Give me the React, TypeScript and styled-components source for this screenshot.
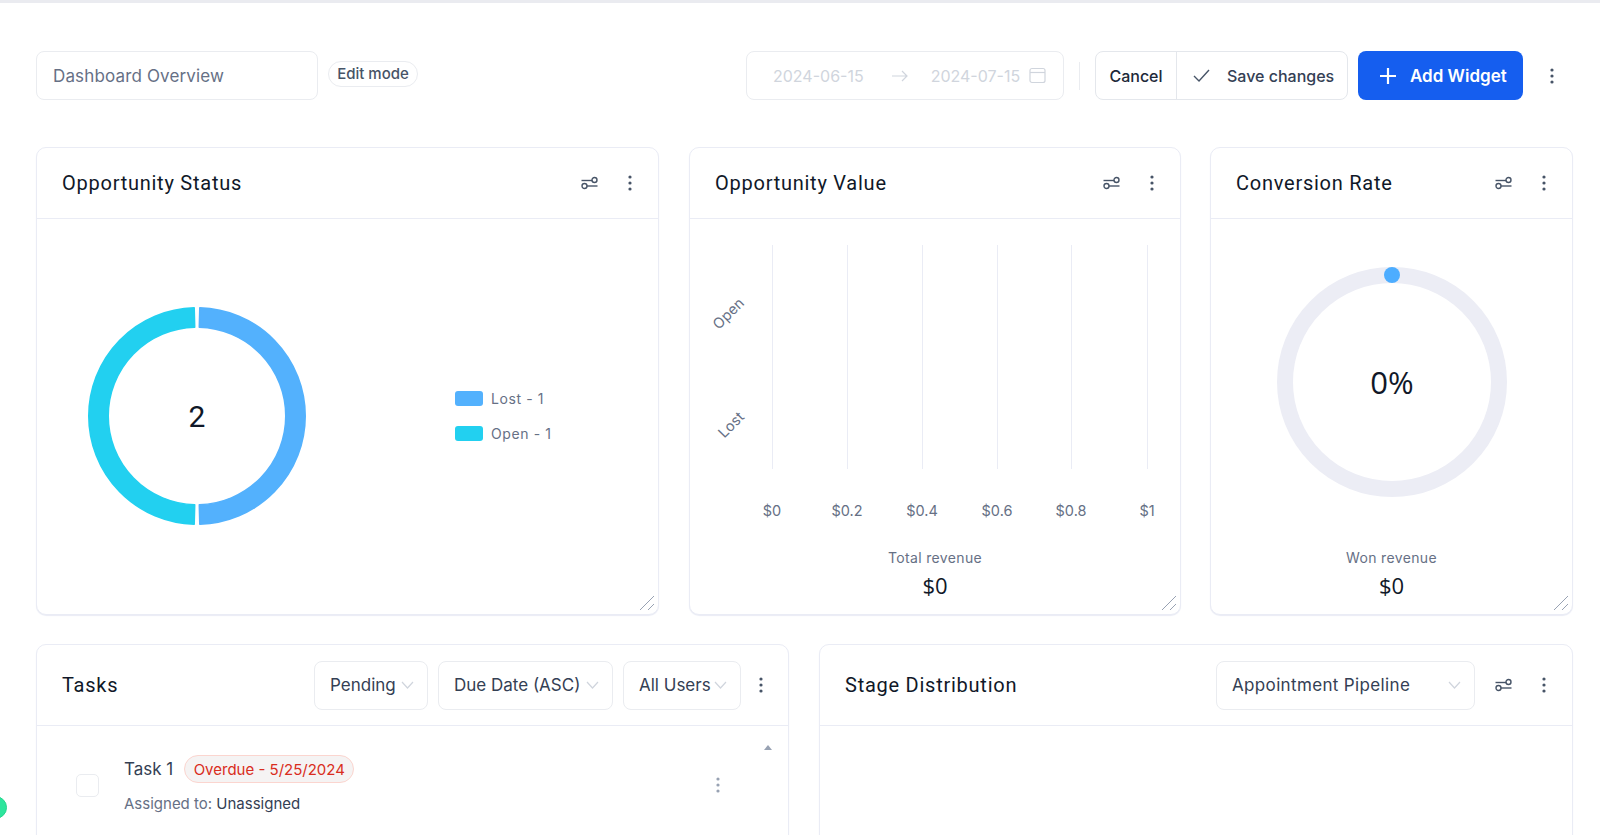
import React from "react";
import styled, { createGlobalStyle } from "styled-components";

const Global = createGlobalStyle`
  * { box-sizing: border-box; }
  html, body { margin: 0; padding: 0; background: #fff; overflow: hidden; }
  body { font-family: Inter, "Liberation Sans", sans-serif; color: #101828; }
`;

const Page = styled.div`
  position: relative;
  width: 1600px;
  height: 835px;
  overflow: hidden;
  border-top: 3px solid #eaebf0;
  padding: 48px 27px 0 36px;
`;

const Toolbar = styled.header`
  display: flex;
  align-items: center;
  height: 49px;
  margin-bottom: 47px;
`;

const NameBox = styled.div`
  width: 282px;
  height: 49px;
  border: 1px solid #eaecf0;
  border-radius: 8px;
  padding: 0 16px;
  display: flex;
  align-items: center;
  font-size: 17px;
  letter-spacing: 0.15px;
  color: #667085;
`;

const ModeBadge = styled.span`
  margin-left: 10px;
  height: 26px;
  width: 90px;
  margin-top: -4px;
  border: 1px solid #eaecf0;
  border-radius: 13px;
  display: flex;
  align-items: center;
  justify-content: center;
  font-size: 15px;
  font-weight: 500;
  color: #475467;
`;

const Spacer = styled.div`
  flex: 1;
`;

const DateBox = styled.div`
  width: 318px;
  height: 49px;
  border: 1px solid #eaecf0;
  border-radius: 8px;
  display: flex;
  align-items: center;
  padding-left: 26px;
  font-size: 16px;
  color: #d0d5dd;
`;

const DateArrow = styled.svg`
  margin: 0 22px 0 27px;
`;

const DateIcon = styled.svg`
  margin-left: 9px;
`;

const VRule = styled.div`
  width: 1px;
  height: 28px;
  background: #eaecf0;
  margin: 0 15px;
`;

const BtnGroup = styled.div`
  display: flex;
  width: 253px;
  height: 49px;
  border: 1px solid #e4e7ec;
  border-radius: 8px;
  font-size: 16px;
  font-weight: 500;
  color: #344054;
`;

const CancelPart = styled.div`
  width: 81px;
  display: flex;
  align-items: center;
  justify-content: center;
  border-right: 1px solid #e4e7ec;
  color: #1d2939;
`;

const SavePart = styled.div`
  flex: 1;
  display: flex;
  align-items: center;
  gap: 17px;
  padding-left: 16px;
`;

const AddButton = styled.button`
  margin-left: 10px;
  width: 165px;
  height: 49px;
  border: 0;
  border-radius: 8px;
  background: #155eef;
  color: #fff;
  font: 600 17px Inter, sans-serif;
  display: flex;
  align-items: center;
  padding: 0 0 0 21px;
  gap: 13px;
`;

const ToolbarDots = styled.div`
  width: 50px;
  display: flex;
  justify-content: flex-end;
  padding-right: 19px;
  color: #475467;
`;

const Row = styled.div<{ $gap: number }>`
  display: flex;
  gap: ${(p) => p.$gap}px;
  margin-bottom: 29px;
`;

const Card = styled.section<{ $w: number; $h: number; $mr?: number }>`
  position: relative;
  flex: 0 0 ${(p) => p.$w}px;
  height: ${(p) => p.$h}px;
  margin-right: ${(p) => p.$mr ?? 0}px;
  border: 1px solid #eaecf5;
  border-radius: 10px;
  box-shadow: 0 1px 1px #eaecf5;
  background: #fff;
  display: flex;
  flex-direction: column;
`;

const CardHead = styled.div<{ $h: number; $pr?: number }>`
  height: ${(p) => p.$h}px;
  flex: none;
  border-bottom: 1px solid #eaecf5;
  padding: 0 ${(p) => p.$pr ?? 9}px 0 25px;
  display: flex;
  align-items: center;
`;

const CardTitle = styled.h2`
  flex: 1;
  margin: 0;
  font: 400 20px Roboto, sans-serif;
  letter-spacing: 0.75px;
  color: #101828;
`;

const IconCell = styled.span<{ $w?: number }>`
  width: ${(p) => p.$w ?? 40}px;
  display: flex;
  justify-content: center;
  color: #475467;
`;

const SlidersSvg = styled.svg`
  margin-right: 3px;
`;

const Grip = styled.svg`
  position: absolute;
  right: 3px;
  bottom: 3px;
`;

const DonutBody = styled.div`
  flex: 1;
  display: flex;
  align-items: center;
  padding: 0 0 2px 51px;
`;

const Legend = styled.div`
  margin-left: 149px;
  display: flex;
  flex-direction: column;
  gap: 15px;
`;

const LegendRow = styled.div`
  display: flex;
  align-items: center;
  gap: 8px;
  font-size: 14px;
  color: #667085;
  height: 20px;
  letter-spacing: 0.6px;
`;

const Swatch = styled.span<{ $c: string }>`
  width: 28px;
  height: 15px;
  border-radius: 3px;
  background: ${(p) => p.$c};
`;

const ChartBody = styled.div`
  flex: 1;
  position: relative;
`;

const CenterFoot = styled.div`
  position: absolute;
  left: 0;
  right: 0;
  bottom: 12px;
  display: flex;
  flex-direction: column;
  align-items: center;
`;

const FootLabel = styled.div`
  font-size: 14px;
  line-height: 20px;
  letter-spacing: 0.35px;
  color: #667085;
`;

const FootValue = styled.div`
  margin: 2px 0;
  font: 400 22px "Open Sans", sans-serif;
  line-height: 30px;
  color: #101828;
`;

const ChartSvg = styled.svg`
  display: block;
`;

const RingBody = styled.div`
  flex: 1;
  position: relative;
  display: flex;
  justify-content: center;
`;

const SelectBox = styled.div<{ $w: number; $ls?: number }>`
  flex: 0 0 ${(p) => p.$w}px;
  height: 49px;
  border: 1px solid #eaecf0;
  border-radius: 8px;
  display: flex;
  align-items: center;
  justify-content: space-between;
  padding: 0 13px 0 15px;
  font-size: 17px;
  letter-spacing: ${(p) => p.$ls ?? 0}px;
  color: #344054;
  margin-right: 10px;
`;

const TaskRow = styled.div`
  position: relative;
  display: flex;
  align-items: center;
  padding: 29px 0 0 39px;
`;

const CheckBox = styled.span`
  width: 23px;
  height: 23px;
  border: 1px solid #eaecf0;
  border-radius: 5px;
  margin-right: 25px;
`;

const TaskMain = styled.div`
  flex: 1;
`;

const TaskLine = styled.div`
  display: flex;
  align-items: center;
  gap: 11px;
  font-size: 17px;
  color: #344054;
  height: 28px;
`;

const Overdue = styled.span`
  height: 28px;
  width: 170px;
  border: 1px solid #fbd5cf;
  border-radius: 14px;
  background: #f5f3f3;
  display: flex;
  align-items: center;
  justify-content: center;
  font-size: 15px;
  color: #d92d20;
`;

const Assigned = styled.div`
  margin-top: 10px;
  font-size: 15px;
  line-height: 22px;
  color: #667085;
`;

const Strong = styled.span`
  color: #344054;
`;

const ScrollUp = styled.span`
  position: absolute;
  right: 16px;
  top: 19px;
  width: 0;
  height: 0;
  border-left: 4.5px solid transparent;
  border-right: 4.5px solid transparent;
  border-bottom: 5px solid #98a2b3;
`;

const RowDots = styled.span`
  margin-right: 68px;
  display: flex;
  color: #98a2b3;
`;

const StatusDot = styled.span`
  position: absolute;
  left: -16px;
  top: 793px;
  width: 23px;
  height: 23px;
  border-radius: 50%;
  background: #2ee59d;
  border: 1px solid #25d68e;
`;

const Sliders = () => (
  <SlidersSvg width="17" height="14" viewBox="0 0 17 14" fill="none" stroke="currentColor" strokeWidth="1.4">
    <path d="M0.5 4.5h10.5" />
    <circle cx="13.5" cy="4" r="2.5" />
    <path d="M16.5 10H6" />
    <circle cx="3.5" cy="10" r="2.5" />
  </SlidersSvg>
);

const Dots = () => (
  <svg width="4" height="16" viewBox="0 0 4 16" fill="currentColor">
    <circle cx="2" cy="2" r="1.6" />
    <circle cx="2" cy="8" r="1.6" />
    <circle cx="2" cy="14" r="1.6" />
  </svg>
);

const Chevron = () => (
  <svg width="13" height="8" viewBox="0 0 13 8" fill="none" stroke="#d0d5dd" strokeWidth="1.2">
    <path d="M1 1l5.5 6L12 1" />
  </svg>
);

const GripIcon = () => (
  <Grip width="16" height="16" viewBox="0 0 16 16" stroke="#98a2b3" strokeWidth="1">
    <path d="M1 15L15 1M9 15l6-6" />
  </Grip>
);

const HeadIcons = () => (
  <>
    <IconCell><Sliders /></IconCell>
    <IconCell $w={38}><Dots /></IconCell>
  </>
);

const polar = (r: number, deg: number) => {
  const a = ((deg - 90) * Math.PI) / 180;
  return [109 + r * Math.cos(a), 109 + r * Math.sin(a)];
};

const arc = (ro: number, ri: number, from: number, to: number) => {
  const [x1, y1] = polar(ro, from);
  const [x2, y2] = polar(ro, to);
  const [x3, y3] = polar(ri, to);
  const [x4, y4] = polar(ri, from);
  return `M${x1} ${y1}A${ro} ${ro} 0 0 1 ${x2} ${y2}L${x3} ${y3}A${ri} ${ri} 0 0 0 ${x4} ${y4}Z`;
};

const xTicks = [
  { x: 83, t: "$0" },
  { x: 158, t: "$0.2" },
  { x: 233, t: "$0.4" },
  { x: 308, t: "$0.6" },
  { x: 382, t: "$0.8" },
  { x: 458, t: "$1" },
];

export default function App() {
  return (
    <Page>
      <Global />
      <Toolbar>
        <NameBox>Dashboard Overview</NameBox>
        <ModeBadge>Edit mode</ModeBadge>
        <Spacer />
        <DateBox>
          <span>2024-06-15</span>
          <DateArrow width="18" height="12" viewBox="0 0 18 12" fill="none" stroke="#d0d5dd" strokeWidth="1.2">
            <path d="M1 6h15M11 1l5 5-5 5" />
          </DateArrow>
          <span>2024-07-15</span>
          <DateIcon width="17" height="17" viewBox="0 0 17 17" fill="none" stroke="#d0d5dd" strokeWidth="1.2">
            <rect x="1" y="1.5" width="15" height="14" rx="2" />
            <path d="M1 5.5h15" />
          </DateIcon>
        </DateBox>
        <VRule />
        <BtnGroup>
          <CancelPart>Cancel</CancelPart>
          <SavePart>
            <svg width="17" height="13" viewBox="0 0 17 13" fill="none" stroke="#475467" strokeWidth="1.4">
              <path d="M1 7l5 5L16 1" />
            </svg>
            Save changes
          </SavePart>
        </BtnGroup>
        <AddButton>
          <svg width="18" height="18" viewBox="0 0 18 18" stroke="#fff" strokeWidth="2.2">
            <path d="M9 1v16M1 9h16" />
          </svg>
          Add Widget
        </AddButton>
        <ToolbarDots><Dots /></ToolbarDots>
      </Toolbar>

      <Row $gap={29}>
        <Card $w={623} $h={468} $mr={1}>
          <CardHead $h={71} $pr={9}>
            <CardTitle>Opportunity Status</CardTitle>
            <HeadIcons />
          </CardHead>
          <DonutBody>
            <ChartSvg width="218" height="218" viewBox="0 0 218 218">
              <path d={arc(108.2, 88.8, 1.5, 178.5)} fill="#53b1fd" stroke="#53b1fd" strokeWidth="1.6" strokeLinejoin="round" />
              <path d={arc(108.2, 88.8, 181.5, 358.5)} fill="#22d0f0" stroke="#22d0f0" strokeWidth="1.6" strokeLinejoin="round" />
              <text x="109" y="120" textAnchor="middle" fontFamily="Roboto, sans-serif" fontSize="30" fill="#101828">2</text>
            </ChartSvg>
            <Legend>
              <LegendRow><Swatch $c="#53b1fd" />Lost - 1</LegendRow>
              <LegendRow><Swatch $c="#22d0f0" />Open - 1</LegendRow>
            </Legend>
          </DonutBody>
          <GripIcon />
        </Card>

        <Card $w={492} $h={468}>
          <CardHead $h={71}>
            <CardTitle>Opportunity Value</CardTitle>
            <HeadIcons />
          </CardHead>
          <ChartBody>
            <ChartSvg width="490" height="300" viewBox="0 0 490 300">
              {xTicks.map((k) => (
                <line key={k.t} x1={k.x - 0.5} x2={k.x - 0.5} y1="26" y2="250" stroke="#eaecf5" />
              ))}
              {xTicks.map((k) => (
                <text key={k.t} x={k.x - 1} y="297" textAnchor="middle" fontSize="14.5" fill="#667085">{k.t}</text>
              ))}
              <text transform="translate(55 85) rotate(-45)" textAnchor="end" fontSize="14.5" fill="#667085">Open</text>
              <text transform="translate(55 199) rotate(-45)" textAnchor="end" fontSize="14.5" fill="#667085">Lost</text>
            </ChartSvg>
            <CenterFoot>
              <FootLabel>Total revenue</FootLabel>
              <FootValue>$0</FootValue>
            </CenterFoot>
          </ChartBody>
          <GripIcon />
        </Card>

        <Card $w={363} $h={468}>
          <CardHead $h={71}>
            <CardTitle>Conversion Rate</CardTitle>
            <HeadIcons />
          </CardHead>
          <RingBody>
            <ChartSvg width="240" height="290" viewBox="0 0 240 290">
              <circle cx="120" cy="163" r="107" fill="none" stroke="#ecedf5" strokeWidth="16" />
              <circle cx="120" cy="56" r="8" fill="#4dadff" />
              <text x="120" y="175" textAnchor="middle" fontFamily="Open Sans, sans-serif" fontSize="31" fill="#101828">0%</text>
            </ChartSvg>
            <CenterFoot>
              <FootLabel>Won revenue</FootLabel>
              <FootValue>$0</FootValue>
            </CenterFoot>
          </RingBody>
          <GripIcon />
        </Card>
      </Row>

      <Row $gap={30}>
        <Card $w={753} $h={300}>
          <CardHead $h={81} $pr={17}>
            <CardTitle>Tasks</CardTitle>
            <SelectBox $w={114}>Pending<Chevron /></SelectBox>
            <SelectBox $w={175}>Due Date (ASC)<Chevron /></SelectBox>
            <SelectBox $w={118}>All Users<Chevron /></SelectBox>
            <IconCell $w={20}><Dots /></IconCell>
          </CardHead>
          <TaskRow>
            <ScrollUp />
            <CheckBox />
            <TaskMain>
              <TaskLine>Task 1<Overdue>Overdue - 5/25/2024</Overdue></TaskLine>
              <Assigned>Assigned to: <Strong>Unassigned</Strong></Assigned>
            </TaskMain>
            <RowDots><Dots /></RowDots>
          </TaskRow>
        </Card>

        <Card $w={754} $h={300}>
          <CardHead $h={81}>
            <CardTitle>Stage Distribution</CardTitle>
            <SelectBox $w={259} $ls={0.35}>Appointment Pipeline<Chevron /></SelectBox>
            <HeadIcons />
          </CardHead>
        </Card>
      </Row>
      <StatusDot />
    </Page>
  );
}
